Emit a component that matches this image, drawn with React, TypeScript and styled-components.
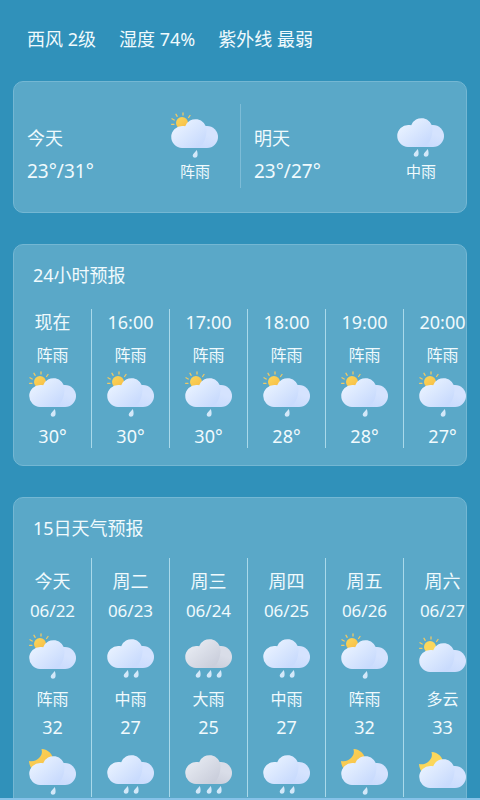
import React, { useId } from "react";
import styled, { createGlobalStyle } from "styled-components";

type Sky = "shower" | "rain" | "heavy" | "cloudy";

const GlobalStyle = createGlobalStyle`
  * { box-sizing: border-box; }
  body {
    margin: 0;
    background: #3091ba;
    color: #f0fafd;
    font-family: "Noto Sans", "Noto Sans CJK SC", sans-serif;
    font-weight: 400;
  }
  h2, p, ul { margin: 0; padding: 0; font-weight: inherit; }
`;

const Screen = styled.main`
  height: 100vh;
  overflow-x: hidden;
  overflow-y: auto;
  scrollbar-width: none;
  padding: 26px 13px 0;
  border-bottom: 2px solid #86c2e8;
`;

const Conditions = styled.ul`
  display: flex;
  gap: 23px;
  padding: 0 14px;
  margin-bottom: 29px;
  list-style: none;
  font-size: 18px;
  line-height: 26px;
  white-space: nowrap;
`;

const Card = styled.section`
  border: 1px solid #74b7d3;
  border-radius: 10px;
  background: #5aa8c8;
  overflow: hidden;
  margin-bottom: 31px;
`;

const Summary = styled(Card)`
  display: grid;
  grid-template-columns: 1fr 1fr;
  padding: 22px 0 24px;
`;

const DayHalf = styled.div`
  display: grid;
  grid-template-columns: 1fr 48px;
  grid-template-rows: 48px 22px;
  padding: 8px 21px 6px 13px;
  line-height: 22px;

  & + & {
    border-left: 1px solid #7dbcd7;
  }
`;

const DayName = styled.h2`
  align-self: end;
  font-size: 18px;
  line-height: 26px;
  padding-bottom: 9px;
  box-sizing: content-box;
`;

const Range = styled.p`
  font-size: 19px;
`;

const Condition = styled.p`
  font-size: 15px;
  text-align: center;
`;

const Title = styled.h2<{ $gap: number }>`
  padding: 16px 19px 0;
  margin-bottom: ${(p) => p.$gap}px;
  font-size: 18px;
  line-height: 28px;
`;

const Strip = styled.ul<{ $bottom: number }>`
  display: grid;
  grid-auto-flow: column;
  grid-auto-columns: 78px;
  margin-bottom: ${(p) => p.$bottom}px;
  list-style: none;
  overflow-x: auto;
  overflow-y: hidden;
  scrollbar-width: none;
`;

const Slot = styled.li<{ $top: number }>`
  display: flex;
  flex-direction: column;
  align-items: center;
  padding-top: ${(p) => p.$top}px;
  border-right: 1px solid #a9d9ea;
  white-space: nowrap;
`;

const Line = styled.span<{ $size: number; $before?: number; $after?: number }>`
  font-size: ${(p) => p.$size}px;
  line-height: 24px;
  margin-top: ${(p) => p.$before ?? 0}px;
  margin-bottom: ${(p) => p.$after ?? 0}px;
`;

const Icon = styled.svg`
  display: block;
  flex: none;
  width: 48px;
  height: 48px;
`;

const lift: Record<Sky, number> = { shower: 0, rain: -1, heavy: -1, cloudy: 3 };
const drops: Record<Sky, number[]> = {
  shower: [24],
  rain: [19, 29],
  heavy: [13, 24, 34],
  cloudy: [],
};

function WeatherIcon({ sky, night = false }: { sky: Sky; night?: boolean }) {
  const id = useId();
  const grey = sky === "heavy";
  const bright = sky === "shower" || sky === "cloudy";
  const c = grey ? ["#e4e8f0", "#cbcfdc", "#d9dde8"] : ["#e6f0ff", "#c9dbfd", "#d5e3fe"];
  const ref = (n: string) => `url(#${id}${n})`;
  return (
    <Icon viewBox="0 0 48 48" aria-hidden="true">
      <defs>
        <linearGradient id={`${id}front`} gradientUnits="userSpaceOnUse" x1="9" y1="13" x2="27" y2="34">
          <stop offset="0" stopColor={c[0]} />
          <stop offset="1" stopColor={c[1]} />
        </linearGradient>
        <linearGradient id={`${id}back`} gradientUnits="userSpaceOnUse" x1="40" y1="14" x2="32" y2="36">
          <stop offset="0" stopColor={c[2]} />
          <stop offset="0.4" stopColor={c[2]} />
          <stop offset="1" stopColor={c[1]} />
        </linearGradient>
        <linearGradient id={`${id}gold`} x1="0" y1="0" x2="0.8" y2="1">
          <stop offset="0" stopColor="#fbd75b" />
          <stop offset="1" stopColor={sky === "cloudy" ? "#fbd75b" : "#f7bd45"} />
        </linearGradient>
      </defs>
      <g transform={`translate(0 ${lift[sky]})`}>
        {bright && !night && (
          <>
            <circle cx="11" cy="11" r="6" fill={ref("gold")} />
            <path
              d="M12 0.8V3M5 2.3L6.2 4.3M19 3.500L17.6 5.5M1 6.8L3.2 8M0.6 12.300H3"
              fill="none"
              stroke="#edc965"
              strokeWidth="1.3"
              strokeLinecap="round"
            />
          </>
        )}
        {bright && night && (
          <path
            d="M12.500 0C19.500 0.500 23.500 5 25 12L12 24C4.500 23.500 0.500 19 0 12C4 13 8 11.500 10.500 8.500C13 5.800 13.300 3 12.500 0Z"
            fill={ref("gold")}
          />
        )}
        <path
          d="M24 14H36A11 11 0 0 1 36 36H24Z"
          fill={ref("back")}
        />
        <path
          d="M11.500 14C12.500 14 13.300 14.100 14.200 14.300A11 11 0 0 1 35.500 18C35.500 26 32 36 25 36H11A11 11 0 0 1 11.500 14Z"
          fill={ref("front")}
        />
        {drops[sky].map((x) => (
          <path
            key={x}
            transform={`translate(${x} 38)`}
            d="M1.800 0C2.500 2 2.800 4 2.500 5.500C2 8.500-2.200 8.400-2.300 5.500C-2.300 3.500 0.300 2.400 1.800 0Z"
            fill="#d3e8f9"
          />
        ))}
      </g>
    </Icon>
  );
}

const summary: { day: string; range: string; text: string; sky: Sky }[] = [
  { day: "今天", range: "23°/31°", text: "阵雨", sky: "shower" },
  { day: "明天", range: "23°/27°", text: "中雨", sky: "rain" },
];

const hours = [
  { time: "现在", temp: "30°" },
  { time: "16:00", temp: "30°" },
  { time: "17:00", temp: "30°" },
  { time: "18:00", temp: "28°" },
  { time: "19:00", temp: "28°" },
  { time: "20:00", temp: "27°" },
];

const days: { day: string; date: string; text: string; high: number; sky: Sky }[] = [
  { day: "今天", date: "06/22", text: "阵雨", high: 32, sky: "shower" },
  { day: "周二", date: "06/23", text: "中雨", high: 27, sky: "rain" },
  { day: "周三", date: "06/24", text: "大雨", high: 25, sky: "heavy" },
  { day: "周四", date: "06/25", text: "中雨", high: 27, sky: "rain" },
  { day: "周五", date: "06/26", text: "阵雨", high: 32, sky: "shower" },
  { day: "周六", date: "06/27", text: "多云", high: 33, sky: "cloudy" },
];

export default function App() {
  return (
    <>
      <GlobalStyle />
      <Screen>
        <Conditions>
          <li>西风 2级</li>
          <li>湿度 74%</li>
          <li>紫外线 最弱</li>
        </Conditions>

        <Summary>
          {summary.map((d) => (
            <DayHalf key={d.day}>
              <DayName>{d.day}</DayName>
              <WeatherIcon sky={d.sky} />
              <Range>{d.range}</Range>
              <Condition>{d.text}</Condition>
            </DayHalf>
          ))}
        </Summary>

        <Card>
          <Title $gap={20}>24小时预报</Title>
          <Strip $bottom={17}>
            {hours.map((h) => (
              <Slot key={h.time} $top={1}>
                <Line $size={18}>{h.time}</Line>
                <Line $size={16} $before={9} $after={4}>阵雨</Line>
                <WeatherIcon sky="shower" />
                <Line $size={18} $before={5}>{h.temp}</Line>
              </Slot>
            ))}
          </Strip>
        </Card>

        <Card>
          <Title $gap={16}>15日天气预报</Title>
          <Strip $bottom={17}>
            {days.map((d) => (
              <Slot key={d.date} $top={11}>
                <Line $size={18}>{d.day}</Line>
                <Line $size={17} $before={6} $after={10}>{d.date}</Line>
                <WeatherIcon sky={d.sky} />
                <Line $size={16} $before={6}>{d.text}</Line>
                <Line $size={18} $before={4} $after={10}>{d.high}</Line>
                <WeatherIcon sky={d.sky} night />
              </Slot>
            ))}
          </Strip>
        </Card>
      </Screen>
    </>
  );
}
